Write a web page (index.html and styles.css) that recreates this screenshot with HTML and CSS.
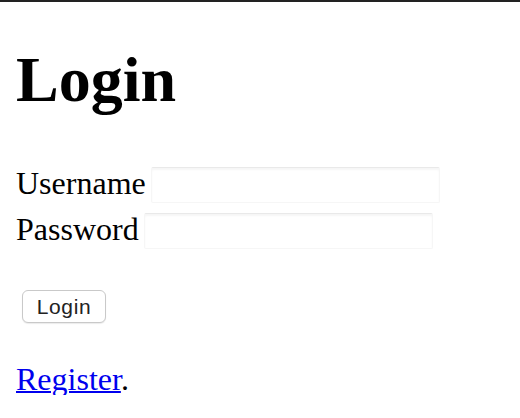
FILE: index.html
```html
<!DOCTYPE html>
<html>
<head>
<meta charset="utf-8">
<title>Login</title>
<link rel="stylesheet" href="styles.css">
</head>
<body>
<div class="topbar"></div>
<main class="page">
  <h1 class="title">Login</h1>
  <form class="form">
    <div class="row">
      <label class="label" for="username">Username</label>
      <input class="field" id="username" type="text">
    </div>
    <div class="row">
      <label class="label" for="password">Password</label>
      <input class="field" id="password" type="password">
    </div>
    <div class="actions">
      <button class="btn" type="submit">Login</button>
    </div>
  </form>
  <p class="footer"><a class="link" href="#">Register</a>.</p>
</main>
</body>
</html>
```
FILE: styles.css
```css
html, body {
  margin: 0;
  padding: 0;
  background: #fff;
}
body {
  font-family: "Liberation Serif", "Times New Roman", serif;
  font-size: 32px;
  color: #000;
}
.topbar {
  height: 2px;
  background: #222;
}
.page {
  padding: 0 16px;
}
.title {
  margin: 42px 0 0;
  font-size: 64px;
  line-height: 72px;
  font-weight: bold;
}
.form {
  margin: 51px 0 0;
}
.row {
  display: flex;
  align-items: flex-start;
  gap: 5px;
}
.row + .row {
  margin-top: 10px;
}
.label {
  line-height: 32px;
}
.field {
  width: 289px;
  height: 36px;
  box-sizing: border-box;
  margin: 0;
  border: 1px solid #f6f6f6;
  border-top-color: #e9e9e9;
  box-shadow: inset 0 2px 2px rgba(0, 0, 0, 0.04);
  background: #fff;
  border-radius: 2px;
}
.actions {
  display: flex;
  margin-top: 41px;
  padding-left: 6px;
}
.btn {
  width: 84px;
  height: 33px;
  margin: 0;
  padding: 0;
  border: 1px solid #c9c9c9;
  border-radius: 6px;
  background: #fff;
  box-shadow: 0 1px 1px rgba(0, 0, 0, 0.08);
  font-family: "Liberation Sans", Arial, sans-serif;
  font-size: 21px;
  letter-spacing: 0.6px;
  color: #222;
}
.footer {
  margin: 40px 0 0;
  line-height: 32px;
}
.link {
  color: #0000ee;
  text-decoration: underline;
  text-decoration-thickness: 2px;
}
```
